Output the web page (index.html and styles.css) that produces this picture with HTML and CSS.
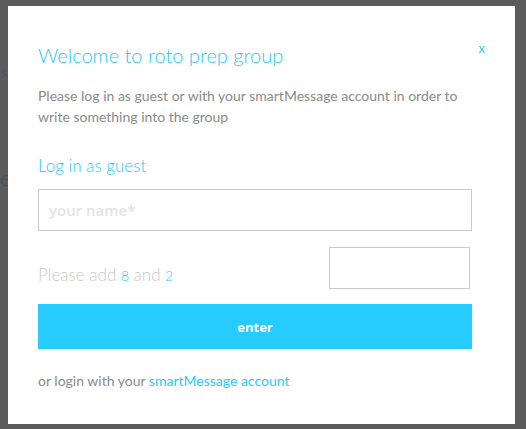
FILE: index.html
```html
<!DOCTYPE html>
<html>
<head>
<meta charset="utf-8">
<link rel="stylesheet" href="styles.css">
</head>
<body>
<div class="backdrop">
  <span class="bg-ep">ep</span>
  <span class="bg-s">s</span>
  <span class="bg-line"></span>
</div>
<div class="modal">
  <div class="head">
    <h1 class="title">Welcome to roto prep group</h1>
    <span class="close">x</span>
  </div>
  <p class="intro">Please log in as guest or with your smartMessage account in order to write something into the group</p>
  <h2 class="sub">Log in as guest</h2>
  <input class="field name" type="text" placeholder="your name*">
  <div class="captcha">
    <span class="question">Please add <span class="num">8</span> and <span class="num small">2</span></span>
    <input class="field answer" type="text">
  </div>
  <button class="enter">enter</button>
  <p class="foot">or login with your <a class="link">smartMessage account</a></p>
</div>
</body>
</html>
```
FILE: styles.css
```css
html, body {
  margin: 0;
  padding: 0;
}
body {
  background: #5b5b5b;
  width: 526px;
  height: 429px;
  overflow: hidden;
  position: relative;
  font-family: "Lato", "Open Sans", sans-serif;
}
.backdrop span {
  position: absolute;
  color: #2f5867;
  font-family: "Lato", sans-serif;
  font-weight: 300;
}
.bg-ep { left: 0px; top: 164px; font-size: 22px; }
.bg-s { left: 1px; top: 64px; font-size: 13px; }
.backdrop .bg-line {
  left: 5px;
  top: 36px;
  width: 1px;
  height: 22px;
  background: #3e6674;
}
.modal {
  position: absolute;
  left: 8px;
  top: 6px;
  width: 507px;
  height: 418px;
  background: #fff;
  box-sizing: border-box;
  padding: 37px 43px 0 30px;
}
.head {
  display: flex;
  justify-content: space-between;
  align-items: flex-start;
}
.title {
  margin: 0;
  font-weight: 300;
  font-size: 20px;
  line-height: 24px;
  color: #29c8f7;
}
.close {
  color: #29c8f7;
  font-size: 13px;
  line-height: 13px;
  margin-top: -1px;
  margin-right: -13px;
}
.intro {
  margin: 18px 0 0;
  font-size: 14px;
  line-height: 21px;
  color: #8a8a8a;
  font-weight: 400;
}
.sub {
  margin: 28px 0 0;
  font-weight: 300;
  font-size: 17px;
  line-height: 22px;
  color: #29c8f7;
}
.field {
  display: block;
  box-sizing: border-box;
  border: 1px solid #cbcbcb;
  height: 42px;
  background: #fff;
  margin: 0;
  outline: none;
}
.name {
  width: 434px;
  margin-top: 12px;
  padding: 0 10px;
  font-family: "Open Sans", sans-serif;
  font-weight: 600;
  font-size: 15px;
}
.name::placeholder {
  color: #e4e4e4;
}
.captcha {
  display: flex;
  justify-content: space-between;
  align-items: flex-end;
  margin-top: 16px;
}
.question {
  font-size: 17px;
  line-height: 20px;
  color: #c8c8c8;
  font-weight: 300;
  padding-bottom: 3px;
}
.num {
  color: #29c8f7;
  font-size: 14px;
}
.num.small {
  font-size: 13px;
}
.answer {
  width: 141px;
  margin-right: 2px;
}
.enter {
  display: block;
  width: 434px;
  height: 45px;
  margin-top: 15px;
  border: none;
  background: #26ccff;
  color: #fff;
  font-family: "Open Sans", sans-serif;
  font-weight: 700;
  font-size: 13px;
  padding: 0;
}
.foot {
  margin: 23px 0 0;
  font-size: 14px;
  line-height: 18px;
  color: #8a8a8a;
}
.link {
  color: #29c8f7;
}
```
